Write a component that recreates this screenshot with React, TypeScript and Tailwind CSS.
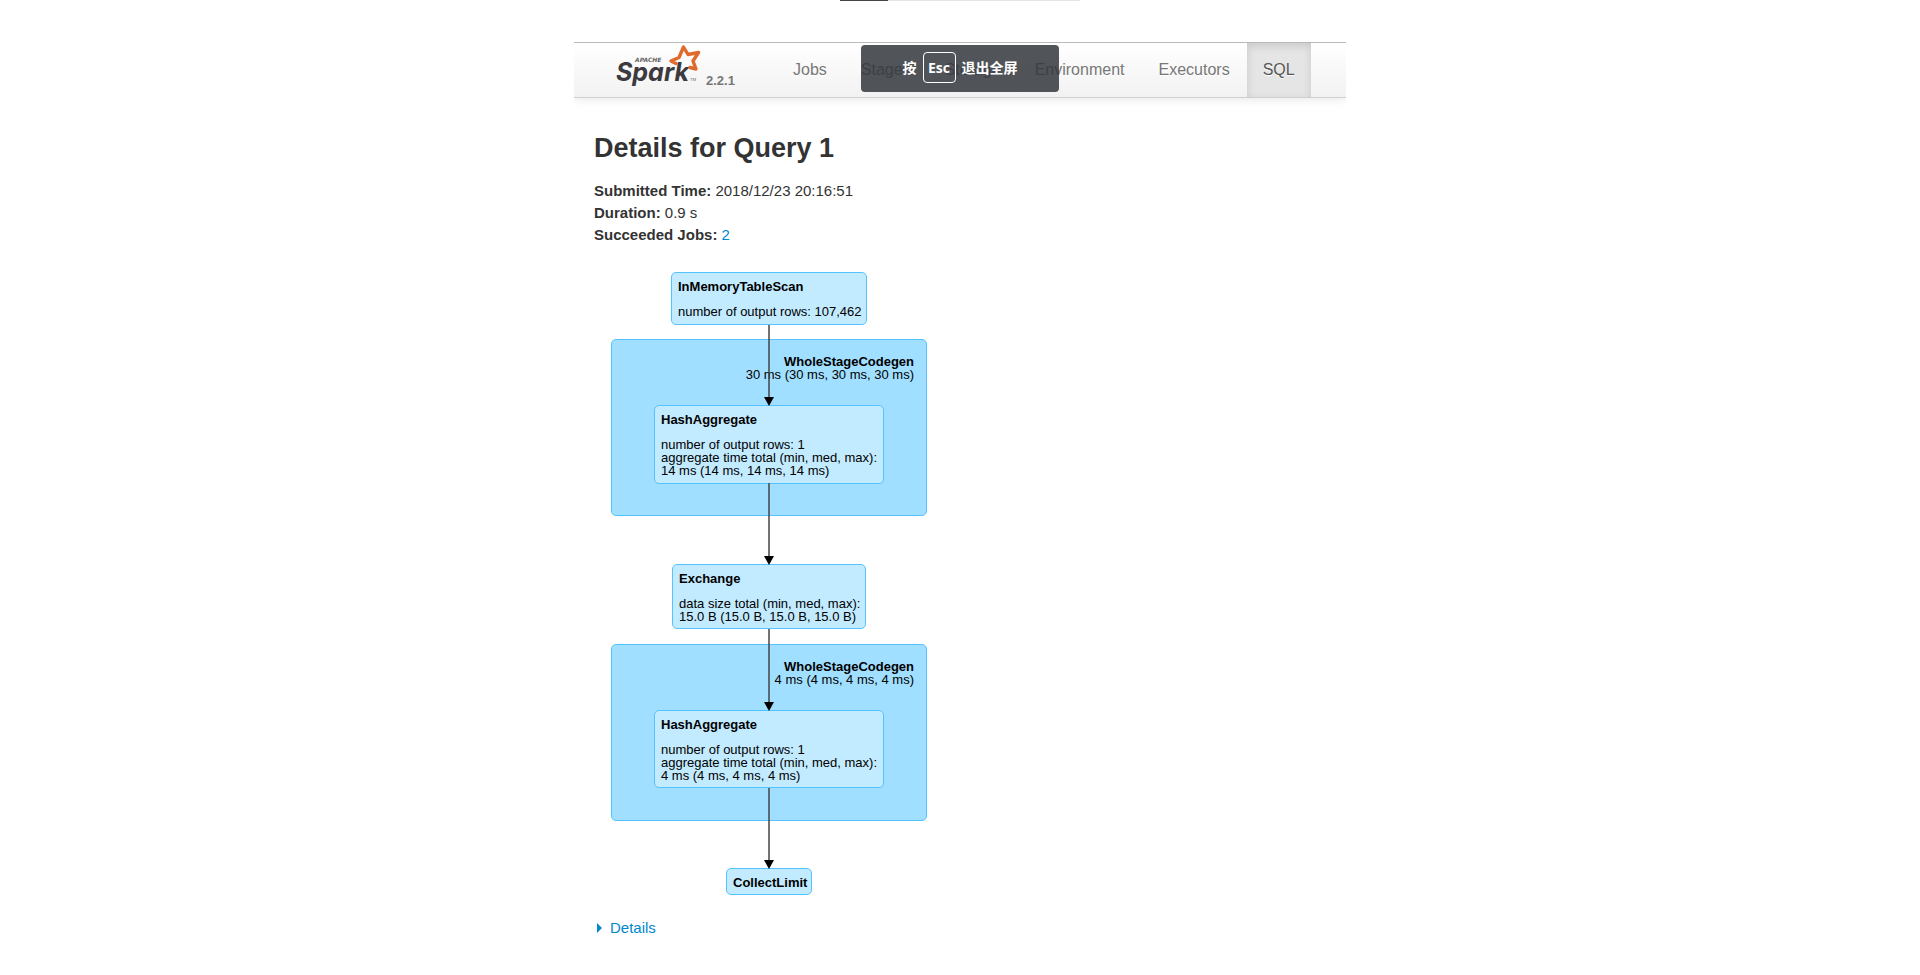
import type { ReactNode } from "react";

const tabs = ["Jobs", "Stages", "Storage", "Environment", "Executors", "SQL"];

function SparkLogo() {
  return (
    <svg viewBox="0 0 90 48" className="h-12 w-[90px]" role="img" aria-label="Apache Spark">
      <text x="19" y="19" fontSize="6" fontWeight="700" fontStyle="italic" fill="#666" fontFamily="DejaVu Sans, sans-serif">
        APACHE
      </text>
      <text x="0" y="38" fontSize="25" fontWeight="700" fontStyle="italic" fill="#3c3a3e" fontFamily="Inter, sans-serif">
        Spark
      </text>
      <path
        d="M60 20.5 L55 18 L63 14.5 L67.5 4 L72 11.5 L82.5 9.5 L77 18 L80 26 L74 24.5"
        fill="none"
        stroke="#e0692c"
        strokeWidth="3.4"
        strokeLinejoin="round"
        strokeLinecap="round"
      />
      <text x="74" y="38" fontSize="4" fill="#666" fontFamily="Inter, sans-serif">
        TM
      </text>
    </svg>
  );
}

function Header() {
  return (
    <header className="overflow-hidden pb-4">
      <div className="flex h-14 items-stretch border-y border-t-[#b9b9b9] border-b-[#d0d0d0] bg-linear-to-b from-white to-[#f2f2f2] pl-[42px] shadow-[0_1px_10px_rgba(0,0,0,0.1)]">
        <a href="#home" className="flex w-40 shrink-0 items-start">
          <SparkLogo />
          <span className="pt-[30px] text-[13px] leading-4 font-bold text-[#777]">2.2.1</span>
        </a>
        <nav className="flex text-base text-[#777] [text-shadow:0_1px_0_#fff]">
          {tabs.map((tab) => (
            <a
              key={tab}
              href={"#" + tab}
              className={
                tab === "SQL"
                  ? "flex items-center bg-[#e5e5e5] px-4 text-[#555] shadow-[inset_0_3px_8px_rgba(0,0,0,0.125)]"
                  : "flex items-center px-[17px]"
              }
            >
              {tab}
            </a>
          ))}
        </nav>
      </div>
    </header>
  );
}

function Cluster({ className, time }: { className: string; time: string }) {
  return (
    <div className={"absolute left-0 h-[177px] w-[316px] rounded-[5px] border border-[#55c3ff] bg-[#a0dfff] px-3 py-[15px] text-right " + className}>
      <div className="font-bold">WholeStageCodegen</div>
      <div>{time}</div>
    </div>
  );
}

function Node({ className, title, children }: { className: string; title: string; children?: ReactNode }) {
  return (
    <div className={"absolute rounded-[5px] border border-[#55c3ff] bg-[#c3ebff] px-1.5 py-[7px] whitespace-nowrap " + className}>
      <div className="font-bold">{title}</div>
      {children && <div className="pt-3">{children}</div>}
    </div>
  );
}

const edges = [
  [53, 133],
  [211, 292],
  [357, 438],
  [516, 596],
];

function PlanGraph() {
  return (
    <div className="relative h-[624px] w-[316px] text-[13px] leading-[13px] text-black">
      <Cluster className="top-[67px]" time="30 ms (30 ms, 30 ms, 30 ms)" />
      <Cluster className="top-[372px]" time="4 ms (4 ms, 4 ms, 4 ms)" />
      <Node className="top-0 left-[60px] h-[53px] w-[196px]" title="InMemoryTableScan">
        number of output rows: 107,462
      </Node>
      <Node className="top-[133px] left-[43px] h-[79px] w-[230px]" title="HashAggregate">
        number of output rows: 1<br />
        aggregate time total (min, med, max):
        <br />
        14 ms (14 ms, 14 ms, 14 ms)
      </Node>
      <Node className="top-[292px] left-[61px] h-[65px] w-[194px]" title="Exchange">
        data size total (min, med, max):
        <br />
        15.0 B (15.0 B, 15.0 B, 15.0 B)
      </Node>
      <Node className="top-[438px] left-[43px] h-[78px] w-[230px]" title="HashAggregate">
        number of output rows: 1<br />
        aggregate time total (min, med, max):
        <br />4 ms (4 ms, 4 ms, 4 ms)
      </Node>
      <Node className="top-[596px] left-[115px] h-[27px] w-[86px]" title="CollectLimit" />
      <svg className="absolute inset-0 size-full" viewBox="0 0 316 624" aria-hidden="true">
        {edges.map(([from, to]) => (
          <g key={from}>
            <path d={`M158 ${from}V${to - 6}`} stroke="#444" strokeWidth="1.5" />
            <path d={`M153 ${to - 8}H163L158 ${to + 1}Z`} fill="#000" />
          </g>
        ))}
      </svg>
    </div>
  );
}

function FullscreenHint() {
  return (
    <div className="absolute top-[45px] left-1/2 flex h-[47px] w-[198px] -translate-x-1/2 items-center justify-center gap-1.5 rounded bg-[rgba(50,54,60,0.85)] pb-0.5 font-['Noto_Sans','Noto_Sans_CJK_SC',sans-serif] text-sm font-bold text-white">
      <span>按</span>
      <kbd className="flex h-[31px] w-[33px] items-center justify-center rounded border border-white font-['Open_Sans',sans-serif] text-sm">
        Esc
      </kbd>
      <span>退出全屏</span>
    </div>
  );
}

export default function App() {
  return (
    <div className="relative min-h-screen bg-white font-['Liberation_Sans',Arial,sans-serif] text-[#333]">
      <div className="mx-auto h-px w-60 bg-[#e4e4e4]">
        <div className="h-px w-12 bg-[#444]" />
      </div>
      <div className="mx-auto max-w-[772px] pt-[41px]">
        <Header />
        <main className="px-5 pt-3.5">
          <h1 className="text-[27px] leading-10 font-bold">Details for Query 1</h1>
          <ul className="pt-3 pb-[26px] text-[15px] leading-[22px]">
            <li>
              <strong>Submitted Time:</strong> 2018/12/23 20:16:51
            </li>
            <li>
              <strong>Duration:</strong> 0.9 s
            </li>
            <li>
              <strong>Succeeded Jobs:</strong>{" "}
              <a href="#job-2" className="text-[#0088cc]">
                2
              </a>
            </li>
          </ul>
          <div className="pl-[17px]">
            <PlanGraph />
          </div>
          <button type="button" className="mt-5 flex items-center gap-2 pl-[3px] text-[15px] leading-6 text-[#0088cc]">
            <svg viewBox="0 0 5 10" className="h-2.5 w-[5px]" fill="currentColor" aria-hidden="true">
              <path d="M0 0L5 5L0 10Z" />
            </svg>
            Details
          </button>
        </main>
      </div>
      <FullscreenHint />
    </div>
  );
}
